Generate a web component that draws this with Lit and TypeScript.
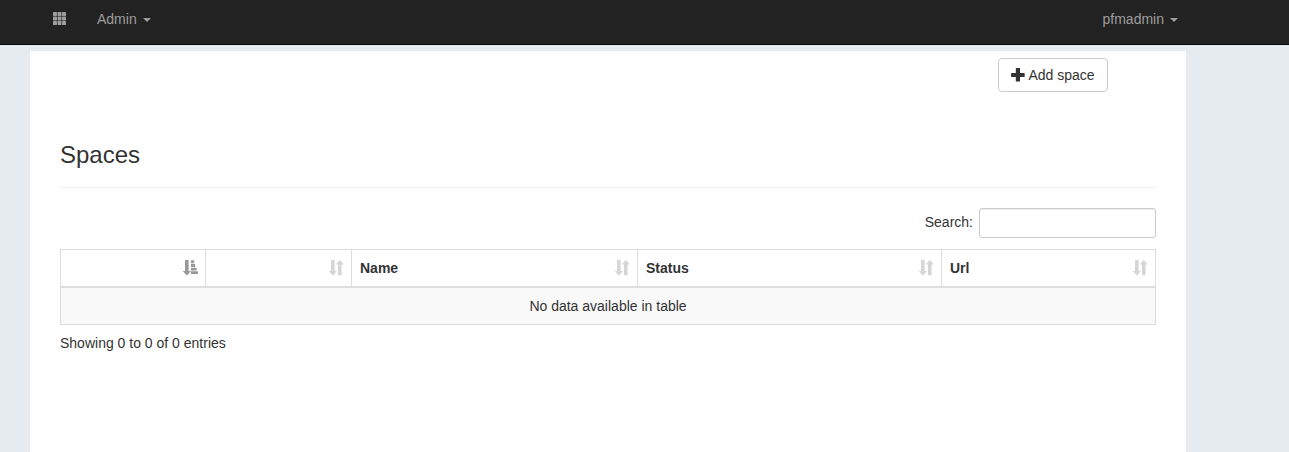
import { LitElement, html, css, svg } from "lit";
import { customElement } from "lit/decorators.js";

const grid = svg`${[0, 4.6, 9.2].map((y) =>
  [0, 4.6, 9.2].map((x) => svg`<rect x=${x} y=${y} width="4" height="3.9" rx=".4"/>`)
)}`;

const sortBoth = html`<svg class="sort both" width="15" height="16" viewBox="0 0 15 16">
  <path d="M2.3 0h3q.3 0 .3.3V11h1.8q.6 0 .2.5L4.2 15.2q-.3.3-.6 0L.1 11.5q-.4-.5.2-.5H2V.3q0-.3.3-.3zM9.3 15.2q-.3 0-.3-.3V4.4H7.3q-.6 0-.2-.5L10.5.2q.3-.3.6 0L14.5 3.9q.4.5-.2.5h-1.7v10.5q0 .3-.3.3z"/>
</svg>`;

const sortAsc = html`<svg class="sort" width="15" height="16" viewBox="0 0 15 16">
  <path d="M2.3 0h3q.3 0 .3.3V11h1.8q.6 0 .2.5L4.2 15.2q-.3.3-.6 0L.1 11.5q-.4-.5.2-.5H2V.3q0-.3.3-.3z"/>
  <path d="M8 .2h2.8q.4 0 .4.4v2.2q0 .4-.4.4H8zM8 4h3.8q.4 0 .4.4v2.2q0 .4-.4.4H8zM8 7.7h5.2q.4 0 .4.4v2q0 .4-.4.4H8zM8 11.2h6.5q.4 0 .4.4v2.1q0 .4-.4.4H8z"/>
</svg>`;

@customElement("app-root")
export class AppRoot extends LitElement {
  static styles = css`
    :host {
      display: block;
      height: 452px;
      overflow: hidden;
      background: #e6ebef;
      color: #333;
      font: 14px/20px "Liberation Sans", Arial, sans-serif;
    }
    * { box-sizing: border-box; }
    svg { display: block; }
    nav {
      display: flex;
      align-items: flex-start;
      height: 45px;
      padding: 9px 111px 0 53px;
      background: #222;
      border-bottom: 1px solid #080808;
      color: #9d9d9d;
    }
    .apps { margin: 3px 31px 0 0; fill: #9d9d9d; }
    .menu { display: flex; align-items: center; gap: 6px; }
    .user { margin-left: auto; }
    .caret {
      margin-top: 2px;
      border: 4px solid transparent;
      border-top-color: #9d9d9d;
      border-bottom: 0;
    }
    main {
      width: 1156px;
      height: 401px;
      margin: 6px 0 0 30px;
      padding: 7px 30px 0;
      background: #fff;
    }
    .tools { display: flex; justify-content: flex-end; padding-right: 48px; }
    button {
      display: flex;
      align-items: center;
      width: 110px;
      height: 34px;
      padding: 0 0 0 12px;
      gap: 3.5px;
      border: 1px solid #ccc;
      border-radius: 4px;
      background: #fff;
      color: #333;
      font: inherit;
      white-space: nowrap;
    }
    h3 {
      margin: 50px 0 0;
      height: 46px;
      border-bottom: 1px solid #eee;
      font-size: 24px;
      font-weight: 400;
      line-height: 26px;
    }
    .search { display: flex; justify-content: flex-end; margin-top: 20px; }
    label { display: flex; gap: 6px; line-height: 29px; }
    input {
      width: 177px;
      height: 30px;
      border: 1px solid #ccc;
      border-radius: 3px;
      background: #fff;
      box-shadow: inset 0 1px 1px rgba(0, 0, 0, 0.075);
    }
    .table { margin-top: 11px; border: 1px solid #ddd; }
    .head {
      display: grid;
      grid-template-columns: 145px 146px 286px 304px 213px;
      height: 38px;
      border-bottom: 2px solid #ddd;
      font-weight: 700;
    }
    .th {
      display: flex;
      align-items: center;
      justify-content: space-between;
      padding: 0 7px 0 8px;
      border-right: 1px solid #ddd;
    }
    .th:last-child { border-right: 0; }
    .sort { fill: #999; margin-left: auto; }
    .both { fill: #d6d6d6; }
    .empty { height: 36px; background: #f9f9f9; line-height: 36px; text-align: center; }
    .info { margin-top: 8px; }
  `;

  render() {
    return html`
      <nav>
        <svg class="apps" width="13" height="13" viewBox="0 0 13.2 13.1">${grid}</svg>
        <div class="menu">Admin <span class="caret"></span></div>
        <div class="menu user">pfmadmin <span class="caret"></span></div>
      </nav>
      <main>
        <div class="tools">
          <button>
            <svg width="14" height="14" viewBox="0 0 14 14" fill="#333">
              <path d="M5.3 0h3.2q.5 0 .5.5V5h4.2q.5 0 .5.5v3q0 .5-.5.5H9v4q0 .5-.5.5H5.3q-.5 0-.5-.5V9H.6q-.5 0-.5-.5v-3Q.1 5 .6 5h4.2V.5q0-.5.5-.5z"/>
            </svg>
            Add space
          </button>
        </div>
        <h3>Spaces</h3>
        <div class="search"><label>Search: <input type="search" /></label></div>
        <div class="table">
          <div class="head">
            <div class="th">${sortAsc}</div>
            ${["", "Name", "Status", "Url"].map((name) => html`<div class="th">${name}${sortBoth}</div>`)}
          </div>
          <div class="empty">No data available in table</div>
        </div>
        <div class="info">Showing 0 to 0 of 0 entries</div>
      </main>
    `;
  }
}
